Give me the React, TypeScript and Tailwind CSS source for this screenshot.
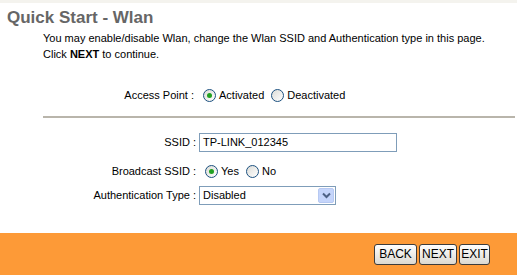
import React from "react";

function Radio({ checked }: { checked?: boolean }) {
  return (
    <span className="inline-flex h-[13px] w-[13px] shrink-0 items-center justify-center rounded-full border border-[#1c5180] bg-gradient-to-br from-[#dcdcd7] to-[#ffffff]">
      {checked ? <span className="h-[5px] w-[5px] rounded-full bg-[#21a121]" /> : null}
    </span>
  );
}

function Btn({ label, w }: { label: string; w: string }) {
  return (
    <button
      className={`${w} h-[21px] rounded-[3px] border border-[#3c3c3c] bg-gradient-to-b from-[#ffffff] to-[#dcd9d0] text-[12px] leading-none text-black`}
    >
      {label}
    </button>
  );
}

export default function App() {
  return (
    <div
      className="relative h-[277px] w-[517px] overflow-hidden bg-white text-[11px] text-black"
      style={{ fontFamily: '"Liberation Sans", Arial, sans-serif' }}
    >
      <div className="h-[3px] bg-[#f4f3ee]" />
      <div className="h-[27px] pl-[7px] pt-[5px] text-[17px] font-bold leading-[20px] text-[#666666]">
        Quick Start - Wlan
      </div>
      <div className="pl-[43px] pt-[0px] leading-[16px]">
        <div>You may enable/disable Wlan, change the Wlan SSID and Authentication type in this page.</div>
        <div>
          Click <b>NEXT</b> to continue.
        </div>
      </div>
      <div className="mt-[23px] flex h-[20px] items-center">
        <div className="w-[194px] text-right">Access Point :</div>
        <div className="ml-[9px] flex items-center gap-[3px]">
          <Radio checked />
          <span>Activated</span>
          <span className="ml-[1px]" />
          <Radio />
          <span>Deactivated</span>
        </div>
      </div>
      <div className="ml-[43px] mr-[2px] mt-[11px] h-[2px] bg-[#b9b5ab]" />
      <div className="mt-[15px] flex h-[19px] items-center">
        <div className="w-[196px] text-right">SSID :</div>
        <div className="ml-[3px] flex h-[19px] w-[198px] items-center border border-[#7f9db9] bg-white pl-[3px]">
          TP-LINK_012345
        </div>
      </div>
      <div className="mt-[9px] flex h-[20px] items-center">
        <div className="w-[196px] text-right">Broadcast SSID :</div>
        <div className="ml-[9px] flex items-center gap-[3px]">
          <Radio checked />
          <span>Yes</span>
          <span className="ml-[1px]" />
          <Radio />
          <span>No</span>
        </div>
      </div>
      <div className="mt-[5px] flex h-[19px] items-center">
        <div className="w-[196px] text-right">Authentication Type :</div>
        <div className="ml-[3px] flex h-[19px] w-[137px] items-center justify-between border border-[#7f9db9] bg-white pl-[3px] pr-[1px]">
          <span>Disabled</span>
          <span className="flex h-[15px] w-[16px] items-center justify-center rounded-[2px] border border-[#b7c9f2] bg-[#c5d5fb]">
            <svg width="9" height="7" viewBox="0 0 9 7">
              <path d="M1 1.5 L4.5 5 L8 1.5" fill="none" stroke="#4d6185" strokeWidth="2" />
            </svg>
          </span>
        </div>
      </div>
      <div className="mt-[28px] flex h-[42px] items-center justify-end gap-[2px] bg-[#fd9a37] pr-[27px]">
        <Btn label="BACK" w="w-[43px]" />
        <Btn label="NEXT" w="w-[38px]" />
        <Btn label="EXIT" w="w-[31px]" />
      </div>
    </div>
  );
}
